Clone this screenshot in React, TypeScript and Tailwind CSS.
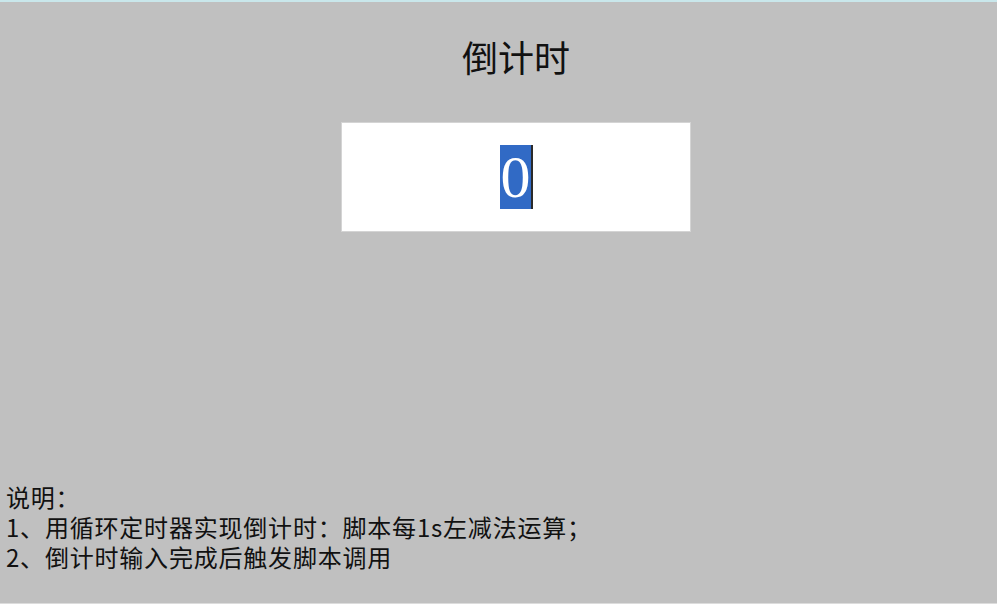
import React from "react";

export default function App() {
  return (
    <div className="w-[997px] h-[604px] flex flex-col overflow-hidden bg-[#c0c0c0]">
      <div className="h-[2px] bg-[#c9e7eb] shrink-0" />
      <div className="flex-1 flex flex-col bg-[#c0c0c0] [font-family:'Noto_Sans_CJK_SC',sans-serif] text-black">
        <div className="ml-[341px] w-[350px] flex flex-col">
          <div className="mt-[32px] h-[44px] text-center text-[36px] leading-[44px] text-[#111]">倒计时</div>
          <div className="mt-[44px] w-[350px] h-[110px] bg-white border border-[#d4d4d4] flex items-center justify-center">
            <div className="flex items-stretch h-[64px] ml-[1px]">
              <span className="w-[31px] h-[64px] bg-[#316ac5] text-white text-center text-[60px] leading-[64px] [font-family:'Liberation_Serif',serif]">0</span>
              <span className="w-[2px] h-[64px] bg-[#2a2a2a]" />
            </div>
          </div>
        </div>
        <div className="mt-[250px] pl-[6px] text-[24px] leading-[30px] tracking-[0.8px] text-[#111] [font-family:'Noto_Sans_CJK_SC',sans-serif]">
          <div>说明：</div>
          <div>1、用循环定时器实现倒计时：脚本每1s左减法运算；</div>
          <div>2、倒计时输入完成后触发脚本调用</div>
        </div>
      </div>
      <div className="h-[1px] bg-[#dcdcdc] shrink-0" />
    </div>
  );
}
